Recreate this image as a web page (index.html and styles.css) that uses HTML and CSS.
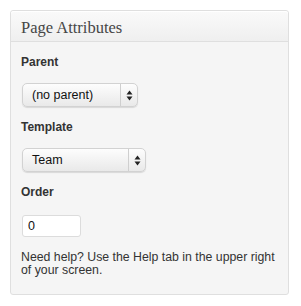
FILE: index.html
```html
<!DOCTYPE html>
<html lang="en">
<head>
  <meta charset="UTF-8">
  <title>Page Attributes</title>
  <link rel="stylesheet" href="styles.css">
</head>
<body>
  <div class="postbox">
    <h3 class="hndle">Page Attributes</h3>
    <div class="inside">
      <p class="field-label">Parent</p>
      <div class="select select-parent">
        <span class="select-value">(no parent)</span>
        <span class="select-arrows">
          <svg width="7" height="11" viewBox="0 0 7 11"><path d="M3.5 0.5 L6.5 4.5 L0.5 4.5 Z M3.5 10.5 L6.5 6.5 L0.5 6.5 Z" fill="#222"/></svg>
        </span>
      </div>

      <p class="field-label">Template</p>
      <div class="select select-template">
        <span class="select-value">Team</span>
        <span class="select-arrows">
          <svg width="7" height="11" viewBox="0 0 7 11"><path d="M3.5 0.5 L6.5 4.5 L0.5 4.5 Z M3.5 10.5 L6.5 6.5 L0.5 6.5 Z" fill="#222"/></svg>
        </span>
      </div>

      <p class="field-label">Order</p>
      <input class="order-input" type="text" value="0">

      <p class="help">Need help? Use the Help tab in the upper right of your screen.</p>
    </div>
  </div>
</body>
</html>
```

FILE: styles.css
```css
body {
  margin: 0;
  padding: 10px;
  background: #fff;
  font-family: "Liberation Sans", Arial, sans-serif;
  color: #333;
}

.postbox {
  width: 279px;
  box-sizing: border-box;
  border: 1px solid #dfdfdf;
  border-radius: 3px;
  background: #f5f5f5;
}

.hndle {
  margin: 0;
  height: 31px;
  box-sizing: border-box;
  padding: 5px 10px 0;
  font-family: "Liberation Serif", Georgia, serif;
  font-size: 16.5px;
  font-weight: normal;
  line-height: 24px;
  color: #464646;
  background: linear-gradient(to bottom, #fafafa, #efefef);
  border-bottom: 1px solid #dfdfdf;
  border-radius: 3px 3px 0 0;
  box-shadow: inset 0 1px 0 #fff;
}

.inside {
  padding: 13px 6px 17px 10px;
}

.field-label {
  margin: 0;
  font-size: 12px;
  font-weight: bold;
  line-height: 15px;
  color: #333;
}

.select {
  display: flex;
  align-items: center;
  height: 24px;
  box-sizing: border-box;
  margin: 13px 0 13px 1px;
  border: 1px solid #d2d2d2;
  border-radius: 5px;
  background: linear-gradient(to bottom, #fdfdfd, #e9e9e9);
  box-shadow: 0 1px 1px rgba(0, 0, 0, 0.12);
}

.select-parent {
  width: 116px;
}

.select-template {
  width: 124px;
}

.select-value {
  flex: 1;
  padding-left: 9px;
  font-size: 12.5px;
  color: #111;
}

.select-arrows {
  display: flex;
  align-items: center;
  justify-content: center;
  width: 16px;
  height: 100%;
  border-left: 1px solid #cfcfcf;
}

.select-arrows svg {
  display: block;
}

.order-input {
  display: block;
  width: 59px;
  height: 22px;
  box-sizing: border-box;
  margin: 15px 0 14px 1px;
  padding: 0 5px;
  border: 1px solid #dcdcdc;
  border-radius: 3px;
  background: #fff;
  font-family: "Liberation Sans", Arial, sans-serif;
  font-size: 12.5px;
  color: #111;
}

.help {
  margin: 0;
  font-size: 12.3px;
  line-height: 13px;
  color: #333;
}
```
